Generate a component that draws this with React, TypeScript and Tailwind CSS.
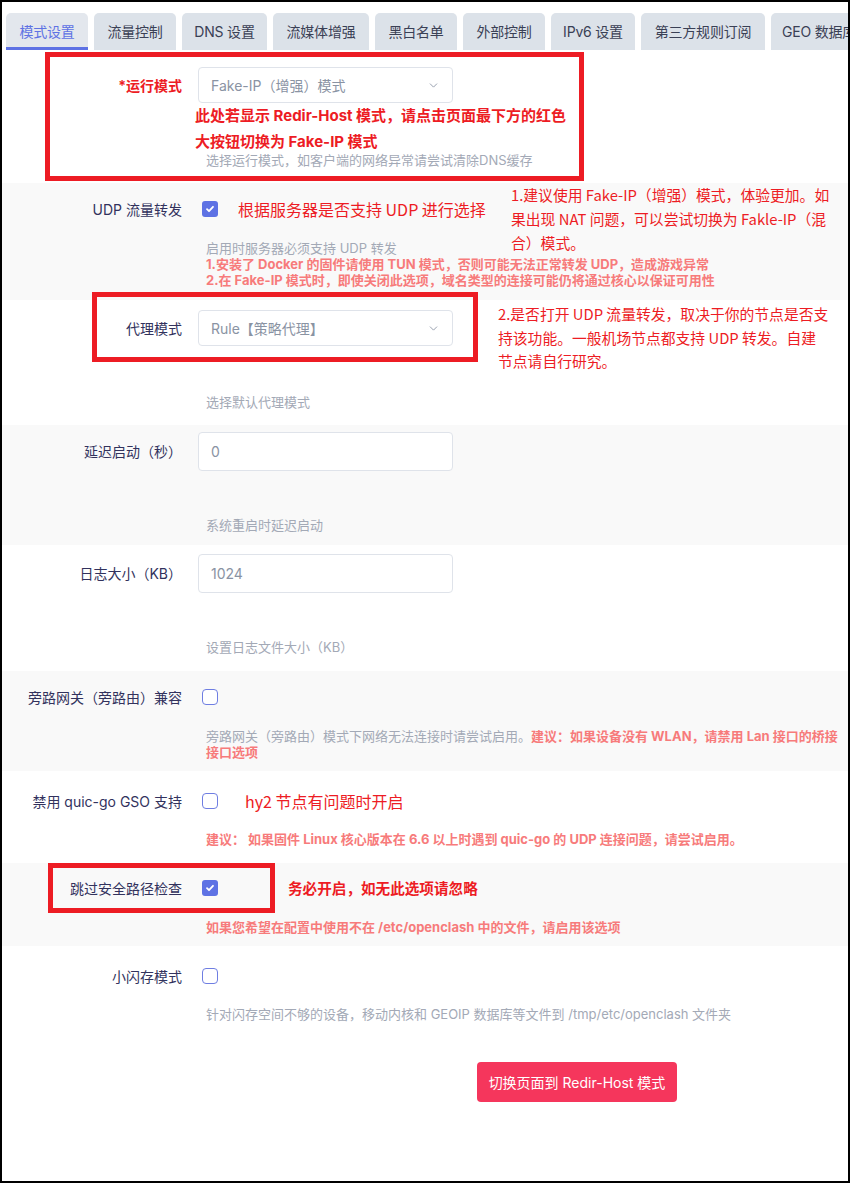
import { ChevronDown } from "lucide-react";

const tabs = [
    { label: "模式设置", w: "w-[82px]" },
    { label: "流量控制", w: "w-[82px]" },
    { label: "DNS 设置", w: "w-[85px]" },
    { label: "流媒体增强", w: "w-[96px]" },
    { label: "黑白名单", w: "w-[82px]" },
    { label: "外部控制", w: "w-[82px]" },
    { label: "IPv6 设置", w: "w-[84px]" },
    { label: "第三方规则订阅", w: "w-[124px]" },
    { label: "GEO 数据库", w: "w-[96px]" },
];

function Checkbox({ checked }: { checked?: boolean }) {
    if (checked) {
        return (
            <span className="ml-1 flex h-4 w-4 shrink-0 items-center justify-center rounded-[3px] bg-[#5e72e4]">
                <svg width="10" height="10" viewBox="0 0 10 10" fill="none">
                    <path d="M2 5.2l2 2 4-4.4" stroke="white" strokeWidth="1.8" strokeLinecap="round" strokeLinejoin="round" />
                </svg>
            </span>
        );
    }
    return <span className="ml-1 block h-4 w-4 shrink-0 rounded-[4px] border border-[#6f7ee2] bg-white" />;
}

function Select({ value }: { value: string }) {
    return (
        <div className="flex h-9 w-[255px] items-center justify-between rounded-[4px] border border-[#dfe3ea] bg-white pl-3 pr-3 text-[14px] text-[#8a93a3]">
            <span>{value}</span>
            <ChevronDown size={13} strokeWidth={1.6} className="text-[#8a93a3]" />
        </div>
    );
}

function TextInput({ value }: { value: string }) {
    return (
        <div className="flex h-[39px] w-[255px] items-center rounded-[4px] border border-[#dfe3ea] bg-white pl-3 text-[14px] text-[#8a93a3]">
            {value}
        </div>
    );
}

export default function App() {
    return (
        <div className="relative h-[1183px] w-[850px] overflow-hidden border-2 border-black bg-white font-['Inter','Noto_Sans_CJK_SC',sans-serif]">
            {/* Tabs */}
            <div className="flex h-[48px] gap-[6px] pl-1 pt-[11px] whitespace-nowrap">
                {tabs.map((t, i) => (
                    <div
                        key={t.label}
                        className={
                            i === 0
                                ? "flex h-[37px] shrink-0 items-center justify-center rounded-t-[5px] border-b-[3px] border-[#5e72e4] bg-[#e3e7ed] pt-[3px] text-[14px] tracking-[-0.2px] text-[#5e72e4] " + t.w
                                : "flex h-[37px] shrink-0 items-center justify-center rounded-t-[5px] bg-[#dce2e9] text-[14px] tracking-[-0.2px] text-[#3a4055] " + t.w
                        }
                    >
                        {t.label}
                    </div>
                ))}
            </div>

            {/* 运行模式 */}
            <div className="grid h-[133px] grid-cols-[180px_1fr] gap-x-4 pt-[17px]">
                <div className="flex h-9 items-center justify-end text-[14px] font-bold text-[#ed1c24]">*运行模式</div>
                <div>
                    <Select value="Fake-IP（增强）模式" />
                    <div className="-ml-[3px] text-[15px] font-bold leading-[26px] whitespace-nowrap text-[#ed1c24]">
                        <div>此处若显示 Redir-Host 模式，请点击页面最下方的红色</div>
                        <div>大按钮切换为 Fake-IP 模式</div>
                    </div>
                    <div className="-mt-[3px] ml-2 text-[13px] leading-4 text-[#a3a9b6]">选择运行模式，如客户端的网络异常请尝试清除DNS缓存</div>
                </div>
            </div>

            {/* UDP 流量转发 */}
            <div className="grid h-[117px] grid-cols-[180px_1fr] gap-x-4 bg-[#f9f9f9] pt-[18px]">
                <div className="flex h-4 items-center justify-end text-[14px] text-[#32325d]">UDP 流量转发</div>
                <div>
                    <div className="flex h-4 items-center">
                        <Checkbox checked />
                        <span className="ml-5 font-['Noto_Sans_CJK_SC',sans-serif] text-[16px] text-[#ed1c24]">根据服务器是否支持 UDP 进行选择</span>
                    </div>
                    <div className="ml-2 mt-[23px] text-[13px] leading-4 text-[#a3a9b6]">启用时服务器必须支持 UDP 转发</div>
                    <div className="ml-2 text-[13px] font-bold leading-4 whitespace-nowrap text-[#f77b7b]">
                        <div>1.安装了 Docker 的固件请使用 TUN 模式，否则可能无法正常转发 UDP，造成游戏异常</div>
                        <div>2.在 Fake-IP 模式时，即使关闭此选项，域名类型的连接可能仍将通过核心以保证可用性</div>
                    </div>
                </div>
            </div>

            {/* 代理模式 */}
            <div className="grid h-[125px] grid-cols-[180px_1fr] gap-x-4 pt-[10px]">
                <div className="flex h-9 items-center justify-end text-[14px] text-[#32325d]">代理模式</div>
                <div>
                    <Select value="Rule【策略代理】" />
                    <div className="ml-2 mt-[48px] text-[13px] leading-4 text-[#a3a9b6]">选择默认代理模式</div>
                </div>
            </div>

            {/* 延迟启动 */}
            <div className="grid h-[120px] grid-cols-[180px_1fr] gap-x-4 bg-[#f9f9f9] pt-[7px]">
                <div className="flex h-[39px] items-center justify-end text-[14px] text-[#32325d]">延迟启动（秒）</div>
                <div>
                    <TextInput value="0" />
                    <div className="ml-2 mt-[46px] text-[13px] leading-4 text-[#a3a9b6]">系统重启时延迟启动</div>
                </div>
            </div>

            {/* 日志大小 */}
            <div className="grid h-[126px] grid-cols-[180px_1fr] gap-x-4 pt-[9px]">
                <div className="flex h-[39px] items-center justify-end text-[14px] text-[#32325d]">日志大小（KB）</div>
                <div>
                    <TextInput value="1024" />
                    <div className="ml-2 mt-[46px] text-[13px] leading-4 text-[#a3a9b6]">设置日志文件大小（KB）</div>
                </div>
            </div>

            {/* 旁路网关 */}
            <div className="grid h-[100px] grid-cols-[180px_1fr] gap-x-4 bg-[#f9f9f9] pt-[18px]">
                <div className="flex h-4 items-center justify-end text-[14px] text-[#32325d]">旁路网关（旁路由）兼容</div>
                <div>
                    <div className="flex h-4 items-center">
                        <Checkbox />
                    </div>
                    <div className="ml-2 mt-[23px] text-[13px] leading-4 text-[#a3a9b6]">
                        <div className="whitespace-nowrap">
                            旁路网关（旁路由）模式下网络无法连接时请尝试启用。
                            <span className="font-bold text-[#f77b7b]">建议：如果设备没有 WLAN，请禁用 Lan 接口的桥接</span>
                        </div>
                        <div className="font-bold text-[#f77b7b]">接口选项</div>
                    </div>
                </div>
            </div>

            {/* quic-go GSO */}
            <div className="grid h-[92px] grid-cols-[180px_1fr] gap-x-4 pt-[22px]">
                <div className="flex h-4 items-center justify-end text-[14px] text-[#32325d]">禁用 quic-go GSO 支持</div>
                <div>
                    <div className="flex h-4 items-center">
                        <Checkbox />
                        <span className="ml-[27px] font-['Noto_Sans_CJK_SC',sans-serif] text-[16px] text-[#ed1c24]">hy2 节点有问题时开启</span>
                    </div>
                    <div className="ml-2 mt-[22px] text-[13px] font-bold leading-4 whitespace-nowrap text-[#f77b7b]">
                        建议： 如果固件 Linux 核心版本在 6.6 以上时遇到 quic-go 的 UDP 连接问题，请尝试启用。
                    </div>
                </div>
            </div>

            {/* 跳过安全路径检查 */}
            <div className="grid h-[83px] grid-cols-[180px_1fr] gap-x-4 bg-[#f9f9f9] pt-[17px]">
                <div className="flex h-4 items-center justify-end text-[14px] text-[#32325d]">跳过安全路径检查</div>
                <div>
                    <div className="flex h-4 items-center">
                        <Checkbox checked />
                        <span className="ml-[70px] font-['Noto_Sans_CJK_SC',sans-serif] text-[14.6px] font-bold text-[#ed1c24]">务必开启，如无此选项请忽略</span>
                    </div>
                    <div className="ml-2 mt-[23px] text-[13px] font-bold leading-4 whitespace-nowrap text-[#f77b7b]">
                        如果您希望在配置中使用不在 /etc/openclash 中的文件，请启用该选项
                    </div>
                </div>
            </div>

            {/* 小闪存模式 */}
            <div className="grid grid-cols-[180px_1fr] gap-x-4 pt-[22px]">
                <div className="flex h-4 items-center justify-end text-[14px] text-[#32325d]">小闪存模式</div>
                <div>
                    <div className="flex h-4 items-center">
                        <Checkbox />
                    </div>
                    <div className="ml-2 mt-[22px] text-[13px] leading-4 whitespace-nowrap text-[#a3a9b6]">
                        针对闪存空间不够的设备，移动内核和 GEOIP 数据库等文件到 /tmp/etc/openclash 文件夹
                    </div>
                    <button className="ml-[279px] mt-[40px] flex h-10 w-[200px] items-center justify-center rounded-[4px] bg-[#f5365c] text-[14px] text-white">
                        切换页面到 Redir-Host 模式
                    </button>
                </div>
            </div>

            {/* Annotations laid over the form */}
            <div className="pointer-events-none absolute left-[43px] top-[50px] h-[129px] w-[539px] border-[5px] border-[#ed1c24]" />
            <div className="pointer-events-none absolute left-[90px] top-[290px] h-[70px] w-[386px] border-[5px] border-[#ed1c24]" />
            <div className="pointer-events-none absolute left-[46px] top-[861px] h-[50px] w-[227px] border-[5px] border-[#ed1c24]" />

            <div className="absolute left-[509px] top-[181px] font-['Noto_Sans_CJK_SC',sans-serif] text-[14.8px] leading-[24px] whitespace-nowrap text-[#ed1c24]">
                <div>1.建议使用 Fake-IP（增强）模式，体验更加。如</div>
                <div>果出现 NAT 问题，可以尝试切换为 Fakle-IP（混</div>
                <div>合）模式。</div>
            </div>
            <div className="absolute left-[496px] top-[300px] font-['Noto_Sans_CJK_SC',sans-serif] text-[14.8px] leading-[23.5px] whitespace-nowrap text-[#ed1c24]">
                <div>2.是否打开 UDP 流量转发，取决于你的节点是否支</div>
                <div>持该功能。一般机场节点都支持 UDP 转发。自建</div>
                <div>节点请自行研究。</div>
            </div>
        </div>
    );
}
